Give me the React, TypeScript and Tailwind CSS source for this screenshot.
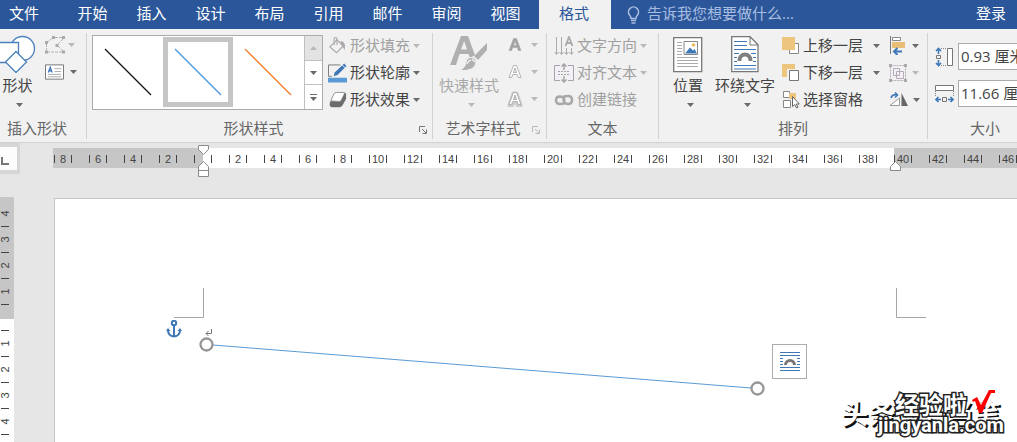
import React from 'react'

const tabs = ['开始', '插入', '设计', '布局', '引用', '邮件', '审阅', '视图']
const rulerMarks = ['8', '6', '4', '2', '', '2', '4', '6', '8', '10', '12', '14', '16', '18', '20', '22', '24', '26', '28', '30', '32', '34', '36', '38', '40', '42', '44', '46']
const sideMarks = ['4', '3', '2', '1', '', '1', '2', '3', '4', '5']

function Caret({ off }: { off?: boolean }) {
  return (
    <svg viewBox="0 0 7 4" className={off ? 'w-[7px] h-1 shrink-0 text-[#b9b9b9]' : 'w-[7px] h-1 shrink-0 text-[#6a6a6a]'} fill="currentColor">
      <path d="M0 0h7L3.5 4z" />
    </svg>
  )
}

function Launcher({ off }: { off?: boolean }) {
  return (
    <button aria-label="更多选项" className={off ? 'pt-1 text-[#b9b9b9]' : 'pt-1 text-[#777]'}>
      <svg viewBox="0 0 8 8" className="w-2 h-2" fill="none" stroke="currentColor">
        <path d="M.5 6V.5H6M3 3l4 4M7.500 3.500v4h-4" />
      </svg>
    </button>
  )
}

function Group({ label, className, launcher, children }: { label: string; className: string; launcher?: React.ReactNode; children: React.ReactNode }) {
  return (
    <section className={'shrink-0 flex flex-col border-r border-[#d2d2d2] ' + className}>
      <div className="h-[84px] flex">{children}</div>
      <div className="h-[22px] flex items-center text-[#666]">
        <h2 className={'flex-1 text-center whitespace-nowrap ' + (launcher ? '-ml-1' : '')}>{label}</h2>
        {launcher}
      </div>
    </section>
  )
}

function RowButton({ icon, text, off, caret = true, wide }: { icon: React.ReactNode; text: string; off?: boolean; caret?: boolean; wide?: boolean }) {
  return (
    <button className={'h-[27px] flex items-center whitespace-nowrap ' + (off ? 'text-[#a0a0a0]' : 'text-[#444]')}>
      {icon}
      <span className="pl-[3px] pb-[2px]">{text}</span>
      {caret && <span className={wide ? 'pl-[10px]' : 'pl-[3px]'}><Caret off={off} /></span>}
    </button>
  )
}

function BigButton({ icon, text, off, className }: { icon: React.ReactNode; text: string; off?: boolean; className: string }) {
  return (
    <button className={'h-[76px] flex flex-col items-center whitespace-nowrap ' + (off ? 'text-[#a8a8a8] ' : 'text-[#444] ') + className}>
      <span className="h-10 flex items-end">{icon}</span>
      <span className="h-6 leading-6">{text}</span>
      <span className="pt-[6px] pl-1"><Caret off={off} /></span>
    </button>
  )
}

function ShapesIcon() {
  return (
    <svg viewBox="0 0 36 38" className="w-9 h-[38px]" fill="#fff" stroke="#4a80bd" strokeWidth="1.3">
      <circle cx="22.500" cy="13.500" r="12" />
      <path d="M-2 7.500h20.500v20H-2z" />
      <path d="M16 16.500L26.500 27 16 37.500 5.500 27z" />
    </svg>
  )
}

function EditPointsIcon() {
  return (
    <svg viewBox="0 0 20 18" className="w-5 h-[18px]" fill="none" stroke="#b4b4b4">
      <path d="M1.500 7L7 2.500M10 1.500h7M18 3l-5 5M13 10l5 5M17 16H3M1.500 8v6" strokeDasharray="3 1" />
      <path d="M7 0h3v3H7zM17 0h3v3h-3zM0 5h3v3H0zM10.500 8h3v3h-3zM0 14.500h3v3H0zM17 14.500h3v3h-3z" fill="#aaa" stroke="none" />
    </svg>
  )
}

function TextBoxIcon() {
  return (
    <svg viewBox="0 0 20 16" className="w-[19px] h-4" fill="none">
      <path d="M.5.500h19v15H.5z" fill="#fff" stroke="#737373" />
      <path d="M10 4.500h7M10 7.500h7M3 10.500h14M3 13h14" stroke="#aaa" />
      <path d="M3.500 8.500L5.500 3l2 5.500M4.200 6.800h2.600" stroke="#3a72b5" strokeWidth="1.300" />
    </svg>
  )
}

function FillIcon() {
  return (
    <svg viewBox="0 0 20 20" className="w-[19px] h-5" fill="none" stroke="#aaa" strokeWidth="1.200">
      <path d="M2 11l7.500-7.500L16 10l-7 7z" fill="#f4f0f4" />
      <path d="M6.500 9V3q0-2 1.500-2t1.500 2v6" />
      <path d="M13 5q4-.5 5 4.500l-.5 5q-2-4-3-4.500z" fill="#aaa" stroke="none" />
    </svg>
  )
}

function OutlineIcon() {
  return (
    <svg viewBox="0 0 20 20" className="w-[19px] h-5" fill="none">
      <path d="M13 1.500H.5v12H4" stroke="#777" />
      <path d="M0 15h20v5H0z" fill="#5b9bd5" />
      <path d="M6 13.500l1-4L17 0l2.500 2.500L10 12z" fill="#3f78b6" />
      <path d="M15 1.500L18 4.500" stroke="#f1f1f1" />
    </svg>
  )
}

function EffectIcon() {
  return (
    <svg viewBox="0 0 20 20" className="w-[19px] h-5">
      <path d="M2 13L6 4q1-2 3-2h8q2 0 2 2v5l-4 7q-1 1.500-3 1.500H4q-3 0-2-4.500z" fill="#6d6d6d" />
      <path d="M3 11l3-7q1-2 2.500-2H16q2 0 1 2l-3 6q-.5 1.500-2 1.500z" fill="#fff" stroke="#888" strokeWidth=".8" />
    </svg>
  )
}

function QuickStyleIcon() {
  return (
    <svg viewBox="0 0 38 38" className="w-[38px] h-[38px]" fill="#b0b0b0">
      <path d="M0 30L11 1h7l7 19-5 3-1.500-4H9.500l-3.500 11zM11 14.500h6L14.200 6z" fillRule="evenodd" />
      <path d="M37 8v7L28 25l-4-4z" />
      <path d="M21 22.500q5 0 5 5-1 9-17 8 6-2 7-8 1-5 5-5z" stroke="#f1f1f1" />
      <path d="M17 29q1-3 4-4M22 24l3 3" fill="none" stroke="#f1f1f1" strokeWidth="1.400" />
    </svg>
  )
}

function LetterIcon({ kind }: { kind: 'solid' | 'outline' | 'glow' }) {
  return (
    <svg viewBox="0 0 16 16" className="w-4 h-4" strokeLinejoin="round">
      {kind === 'glow' && <path d="M2.500 14.500L6.500 2.500h3l4 12h-2.500l-1-3h-4l-1 3zM6.500 9h3L8 4.500z" stroke="#ccc" strokeWidth="4" fill="#bbb" fillRule="evenodd" />}
      <path
        d="M2 13.500L6.500 1.500h3l4.500 12h-2.700l-1-3H5.700l-1 3zM6.500 8.500h3L8 4z"
        fillRule="evenodd"
        fill={kind === 'solid' ? '#a2a2a2' : '#fff'}
        stroke={kind === 'solid' ? '#a2a2a2' : '#aaa'}
        strokeWidth={kind === 'solid' ? '.5' : '.9'}
      />
    </svg>
  )
}

function DirectionIcon() {
  return (
    <svg viewBox="0 0 20 20" className="w-5 h-5" fill="none" stroke="#aaa">
      <path d="M2.500 1v17M7.500 1v17M12.500 12v6M17.500 12v6" />
      <path d="M.5 16l2 2.500 2-2.500M5.500 16l2 2.500 2-2.500M10.500 16l2 2.500 2-2.500M15.500 16l2 2.500 2-2.500" />
      <path d="M11.500 10L15 1l3.500 9M12.500 7h5" strokeWidth="1.800" />
    </svg>
  )
}

function AlignTextIcon() {
  return (
    <svg viewBox="0 0 20 20" className="w-5 h-5" fill="none" stroke="#a9a2ab">
      <path d="M6 2.500H.5v15H6M14 2.500h5.500v15H14" fill="#f5eff7" />
      <path d="M4 8.500h12M4 11.500h12" strokeDasharray="2 1" />
      <path d="M10 1v6M7.500 3.500L10 1l2.500 2.500M10 13v6M7.500 16.500L10 19l2.500-2.500" strokeWidth="1.500" />
    </svg>
  )
}

function LinkIcon() {
  return (
    <svg viewBox="0 0 20 20" className="w-5 h-5" fill="none" stroke="#a8a8a8" strokeWidth="2.600">
      <path d="M11 13Q8.500 14 6 14q-4 0-4-3.700T6 6.500q3 0 4 2.500t-1 2.500M9 7Q11.500 6 14 6q4 0 4 4t-4 4q-3 0-4-2.500t1-2.500" />
    </svg>
  )
}

function PositionIcon() {
  return (
    <svg viewBox="0 0 30 36" className="w-[30px] h-9" fill="none">
      <path d="M.7.700h28v34H.7z" fill="#fff" stroke="#777" strokeWidth="1.300" />
      <path d="M4 5.500h5M4 8.500h5M4 11.500h5M4 14.500h5M4 17.500h5M4 20.500h21M4 23.500h21M4 26.500h21M4 29.500h21" stroke="#aaa" />
      <path d="M11 4.500h13.500v13H11z" stroke="#888" />
      <path d="M12 16.500l5-6 3 3 1.500-1.500 2.500 4.500z" fill="#3f78b6" />
      <circle cx="20.500" cy="8" r="1.800" fill="#f0b45c" />
    </svg>
  )
}

function WrapIcon() {
  return (
    <svg viewBox="0 0 28 37" className="w-7 h-[37px]" fill="none">
      <path d="M.7.700H19l8 8v27H.7z" fill="#fff" stroke="#777" strokeWidth="1.300" />
      <path d="M19 1v8h8" stroke="#777" />
      <path d="M3 5.500h13M3 9.500h13M3 13.500h22M3 17.500h5M3 21.500h3M3 25.500h3M20 17.500h5M22 21.500h3M22 25.500h3M3 29.500h22M3 33h22" stroke="#3f78b6" strokeWidth="1.200" />
      <path d="M8.500 25v-1a5.500 5.500 0 0 1 11 0v1" stroke="#808080" strokeWidth="4" />
    </svg>
  )
}

function ForwardIcon() {
  return (
    <svg viewBox="0 0 18 18" className="w-[18px] h-[18px]">
      <path d="M7.500 6.500h9v10h-9z" fill="#fff" stroke="#888" />
      <path d="M0 0h13v13H0z" fill="#edc57c" />
    </svg>
  )
}

function BackwardIcon() {
  return (
    <svg viewBox="0 0 18 18" className="w-[18px] h-[18px]">
      <path d="M0 0h13v13H0z" fill="#edc57c" />
      <path d="M5 5h12v12H5z" fill="#f1f1f1" />
      <path d="M7.500 6.500h9v10h-9z" fill="#fff" stroke="#777" />
    </svg>
  )
}

function SelectPaneIcon() {
  return (
    <svg viewBox="0 0 18 18" className="w-[18px] h-[18px]" fill="#fff" stroke="#888">
      <path d="M1.500.500h6v6h-6zM1.500 9.500h7v7h-7z" />
      <path d="M7 2h7v6H7z" fill="#edc57c" stroke="none" />
      <path d="M10.500 5.500v10l2.300-2 1.700 3.500 1.500-.8-1.700-3.200h3z" stroke="#666" />
    </svg>
  )
}

function AlignIcon() {
  return (
    <svg viewBox="0 0 18 19" className="w-[18px] h-[19px]" fill="none">
      <path d="M1.500 0v18" stroke="#777" />
      <path d="M3.500 1.500h8v3h-8z" fill="#fff" stroke="#888" />
      <path d="M3 6h13v6H3z" fill="#e9bf78" />
      <path d="M13 15.500H5M8.500 12L5 15.500 8.500 19" stroke="#3f78b6" strokeWidth="2" />
    </svg>
  )
}

function GroupIcon() {
  return (
    <svg viewBox="0 0 18 18" className="w-[18px] h-[18px]" fill="none" stroke="#b5adb7">
      <path d="M1.500 1.500h15v15h-15z" strokeDasharray="2 1" />
      <path d="M4.500 4.500h6v7h-6zM7.500 7.500h7v7h-7z" fill="#f5eff7" />
      <path d="M0 0h3v3H0zM15 0h3v3h-3zM0 15h3v3H0zM15 15h3v3h-3z" fill="#aaa" stroke="none" />
    </svg>
  )
}

function RotateIcon() {
  return (
    <svg viewBox="0 0 19 15" className="w-[19px] h-[15px]" fill="none">
      <path d="M1 13.500L10.500 6v7.500z" fill="#fff" stroke="#999" />
      <path d="M12.500 1v13H19z" fill="#666" />
      <path d="M2 6q1-4 6-3M6 .5L8.500 3 6 5.500" stroke="#3f78b6" strokeWidth="1.500" />
    </svg>
  )
}

function HeightIcon() {
  return (
    <svg viewBox="0 0 19 20" className="w-[19px] h-5" fill="none">
      <path d="M12.500 1.500h5v17h-5z" fill="#fff" stroke="#777" />
      <path d="M6 1.500h6M6 18.500h6" stroke="#888" strokeDasharray="1 1" />
      <path d="M1.500 8.500h4v3h-4z" stroke="#777" />
      <path d="M3.500 7V1.500M1 4l2.500-2.500L6 4M3.500 13v5.500M1 16l2.500 2.500L6 16" stroke="#3f78b6" strokeWidth="1.600" />
    </svg>
  )
}

function WidthIcon() {
  return (
    <svg viewBox="0 0 19 20" className="w-[19px] h-5" fill="none">
      <path d="M.5 1.500h18v5H.5z" fill="#fff" stroke="#777" />
      <path d="M.5 7v6M18.500 7v6" stroke="#888" strokeDasharray="1 1" />
      <path d="M7.500 13.500h4v4h-4z" stroke="#777" />
      <path d="M6 15.500H1M3.500 13L1 15.500 3.500 18M13 15.500h5M15.500 13l2.500 2.500-2.500 2.500" stroke="#3f78b6" strokeWidth="1.600" />
    </svg>
  )
}

function StyleSwatch({ color, name, selected }: { color: string; name: string; selected?: boolean }) {
  return (
    <button aria-label={name} className={'w-[70px] h-[70px] border-[5px] ' + (selected ? 'border-[#c5c5c5]' : 'border-white')}>
      <svg viewBox="0 0 60 60" className="w-[60px] h-[60px]">
        <path d="M7 7l46 46" stroke={color} strokeWidth="1.300" />
      </svg>
    </button>
  )
}

function TabBar() {
  return (
    <nav className="h-[29px] shrink-0 flex items-center bg-[#2b579a] text-white whitespace-nowrap overflow-hidden">
      <button className="w-[63px] h-full shrink-0 pl-[9px] pb-1 text-left">文件</button>
      {tabs.map((tab) => (
        <button key={tab} className="w-[59px] h-full shrink-0 pb-1">{tab}</button>
      ))}
      <button className="w-[72px] h-full ml-1 pr-[2px] pb-1 shrink-0 bg-[#f1f1f1] text-[#2b579a]">格式</button>
      <label className="flex-1 h-full flex items-center gap-[7px] pl-4 pb-1 text-[#a9bde0]">
        <svg viewBox="0 0 13 18" className="w-[13px] h-[18px] shrink-0 mt-1" fill="none" stroke="currentColor" strokeWidth="1.600">
          <path d="M4 12.500Q4 10.500 2.500 9a5 5 0 1 1 8 0Q9 10.500 9 12.500zM4 14.500h5M4.500 17h4" />
        </svg>
        <input className="w-full placeholder:text-[#a9bde0] placeholder:opacity-100 outline-none" aria-label="告诉我" placeholder="告诉我您想要做什么..." />
      </label>
      <button className="shrink-0 pr-[11px] pb-1">登录</button>
    </nav>
  )
}

function Ribbon() {
  return (
    <div className="shrink-0 flex pt-1 pb-[3px] bg-[#f1f1f1] border-b border-[#d2d2d2] overflow-hidden">
      <Group label="插入形状" className="w-[87px] pr-3">
        <BigButton icon={<ShapesIcon />} text="形状" className="w-[35px] shrink-0" />
        <div className="flex flex-col gap-1 pl-[10px]">
          <button aria-label="编辑形状" className="h-[23px] flex items-center gap-[3px]"><EditPointsIcon /><Caret off /></button>
          <button aria-label="文本框" className="h-[23px] flex items-center gap-[6px]"><TextBoxIcon /><Caret /></button>
        </div>
      </Group>

      {/* shape styles gallery */}
      <Group label="形状样式" className="w-[346px] pl-[5px] pr-[5px]" launcher={<Launcher />}>
        <div className="h-[75px] mt-[2px] flex border border-[#ababab] bg-white">
          <div className="flex pt-[1px]">
            <StyleSwatch color="#111" name="黑色细线" />
            <StyleSwatch color="#4a94d8" name="蓝色细线" selected />
            <StyleSwatch color="#ed7d31" name="橙色细线" />
          </div>
          <div className="w-[18px] ml-px flex flex-col border-l border-[#c0c0c0]">
            <button aria-label="上一行" className="flex-1 flex items-center justify-center bg-[#e3e3e3] border-b border-[#c0c0c0]"><span className="rotate-180 flex"><Caret off /></span></button>
            <button aria-label="下一行" className="flex-1 flex items-center justify-center border-b border-[#c0c0c0]"><Caret /></button>
            <button aria-label="其他" className="flex-1 flex flex-col items-center justify-center gap-[2px]"><span className="w-[7px] h-px bg-[#6a6a6a]" /><Caret /></button>
          </div>
        </div>
        <div className="pl-[5px] -mt-px">
          <RowButton icon={<FillIcon />} text="形状填充" off />
          <RowButton icon={<OutlineIcon />} text="形状轮廓" />
          <RowButton icon={<EffectIcon />} text="形状效果" />
        </div>
      </Group>

      <Group label="艺术字样式" className="w-[114px] pl-[5px] pr-[6px]" launcher={<Launcher off />}>
        <BigButton icon={<QuickStyleIcon />} text="快速样式" off className="w-[62px]" />
        <div className="pl-[7px] -mt-[2px]">
          <button aria-label="文本填充" className="h-[27px] flex items-center gap-2"><LetterIcon kind="solid" /><Caret off /></button>
          <button aria-label="文本轮廓" className="h-[27px] flex items-center gap-2"><LetterIcon kind="outline" /><Caret off /></button>
          <button aria-label="文本效果" className="h-[27px] flex items-center gap-2"><LetterIcon kind="glow" /><Caret off /></button>
        </div>
      </Group>

      <Group label="文本" className="w-[112px] pl-[7px] pr-[7px]">
        <div className="-mt-px">
          <RowButton icon={<DirectionIcon />} text="文字方向" off />
          <RowButton icon={<AlignTextIcon />} text="对齐文本" off />
          <RowButton icon={<LinkIcon />} text="创建链接" off caret={false} />
        </div>
      </Group>

      <Group label="排列" className="w-[269px] pl-[6px] pr-[6px]">
        <BigButton icon={<PositionIcon />} text="位置" className="w-[46px]" />
        <BigButton icon={<WrapIcon />} text="环绕文字" className="w-[68px]" />
        <div className="w-[102px] pl-[3px] -mt-px">
          <RowButton icon={<ForwardIcon />} text="上移一层" wide />
          <RowButton icon={<BackwardIcon />} text="下移一层" wide />
          <RowButton icon={<SelectPaneIcon />} text="选择窗格" caret={false} />
        </div>
        <div className="pl-2 -mt-px">
          <button aria-label="对齐" className="h-[27px] flex items-center gap-[5px]"><AlignIcon /><Caret /></button>
          <button aria-label="组合" className="h-[27px] flex items-center gap-[5px]"><GroupIcon /><Caret off /></button>
          <button aria-label="旋转" className="h-[27px] flex items-center gap-[5px]"><RotateIcon /><Caret /></button>
        </div>
      </Group>

      <Group label="大小" className="w-[115px] pl-[7px] pr-[7px]">
        <div className="pt-[10px] flex flex-col gap-[10px] text-[#444]">
          <label className="flex items-center gap-1">
            <HeightIcon />
            <input aria-label="高度" defaultValue="0.93 厘米" className="w-20 h-[27px] pl-[2px] pb-[2px] bg-white border border-[#ababab] outline-none" />
          </label>
          <label className="flex items-center gap-1">
            <WidthIcon />
            <input aria-label="宽度" defaultValue="11.66 厘米" className="w-20 h-[27px] pl-[2px] pb-[2px] bg-white border border-[#ababab] outline-none" />
          </label>
        </div>
      </Group>
    </div>
  )
}

function Ruler() {
  return (
    <div className="h-[54px] shrink-0 flex items-start">
      <div className="w-5 h-[31px] shrink-0 pt-1 pr-[3px] pb-1 bg-[#d6d6d6]">
        <button aria-label="制表符" className="w-full h-full flex items-center bg-[#fcfcfc]">
          <svg viewBox="0 0 9 8" className="w-[9px] h-2 mt-1" fill="none" stroke="#777" strokeWidth="2">
            <path d="M2 0v7h7" />
          </svg>
        </button>
      </div>
      <div className="relative flex-1 min-w-0 ml-[33px] mt-[5px]">
        <div className="h-5 pl-px flex overflow-hidden bg-[linear-gradient(to_right,#c6c6c6_150px,#fff_150px,#fff_841px,#c6c6c6_841px)] font-['Liberation_Sans',sans-serif] text-[11px] text-[#444]">
          {rulerMarks.map((mark, i) => (
            <div key={i} className="w-[35px] h-full shrink-0 flex items-center pt-[2px]">
              <span className="w-px h-2 bg-[#444]" />
              <span className="w-4 text-center">{mark}</span>
              <span className="w-px h-2 bg-[#444]" />
            </div>
          ))}
        </div>
        {/* indent handles */}
        <svg viewBox="0 0 12 32" className="absolute left-[145px] -top-[3px] w-3 h-8" fill="#fff" stroke="#8a8a8a">
          <path d="M.5.500h10v4l-5 5-5-5zM.5 31.500v-10l5-5 5 5v10zM.5 25.500h10" />
        </svg>
        <svg viewBox="0 0 12 10" className="absolute left-[837px] top-[13px] w-3 h-[10px]" fill="#fff" stroke="#8a8a8a">
          <path d="M.5 9.500v-4l5-5 5 5v4z" />
        </svg>
      </div>
    </div>
  )
}

function SideRuler() {
  return (
    <div className="w-[14px] shrink-0 pt-1 overflow-hidden bg-[linear-gradient(to_bottom,#c6c6c6_122px,#fff_122px)] font-['Liberation_Sans',sans-serif] text-[11px] leading-none text-[#444]">
      {sideMarks.map((mark, i) => (
        <div key={i} className="h-[26px] pl-px flex flex-col">
          <span className="flex-1 w-2 flex items-center justify-center -rotate-90">{mark}</span>
          <span className="w-2 h-px bg-[#444]" />
        </div>
      ))}
    </div>
  )
}

function Watermark() {
  return (
    <div className="absolute left-[786px] top-[190px] w-[166px] h-[50px] whitespace-nowrap font-bold text-white select-none">
      <span className="absolute left-0 top-[10px] text-[27px] leading-[30px] [text-shadow:2px_2px_0_#111]">头条@巧当笔</span>
      <span className="absolute left-[54px] top-[2px] text-2xl leading-7 [-webkit-text-stroke:3px_#222] [paint-order:stroke_fill]">经验啦</span>
      <span className="absolute left-[37px] top-[24px] font-['Roboto',sans-serif] text-[20px] leading-6 [-webkit-text-stroke:3px_#222] [paint-order:stroke_fill]">jingyanla.com</span>
      <svg viewBox="0 0 24 24" className="absolute left-[131px] top-px w-6 h-6" fill="#f00">
        <path d="M0 10l5-3 4 8L17 0h6v3h-4L10 23H7L3 11l-2 1z" />
      </svg>
    </div>
  )
}

function Page() {
  return (
    <main className="relative flex-1 min-w-0 ml-10 mt-px bg-white border-l border-t border-[#c6c6c6] overflow-hidden">
      {/* margin corners and the connector line */}
      <svg className="absolute left-0 top-0 w-[900px] h-60" viewBox="0 0 900 240" fill="none">
        <path d="M148.500 89v29.500H119M841.500 89v29.500H871" stroke="#a6a6a6" />
        <path d="M158 146l538 43" stroke="#5b9bd5" />
        <circle cx="151.500" cy="145.500" r="6" fill="#fff" stroke="#969696" strokeWidth="2.300" />
        <circle cx="702.500" cy="189.500" r="6" fill="#fff" stroke="#969696" strokeWidth="2.300" />
        <path d="M156.500 130v4.500H151M153.500 132l-2.500 2.500 2.500 2.500" stroke="#777" />
      </svg>
      <svg viewBox="0 0 16 18" className="absolute left-[111px] top-[121px] w-4 h-[18px]" fill="none" stroke="#3f78b6" strokeWidth="2">
        <circle cx="8" cy="3" r="2.200" />
        <path d="M8 5v12M2 10q0 6 6 6.500 6-.5 6-6.500" />
        <path d="M0 11l2-3 2.500 3zM11.500 11L14 8l2 3z" fill="#3f78b6" stroke="none" />
      </svg>
      <button aria-label="布局选项" className="absolute left-[717px] top-[145px] w-[35px] h-[35px] flex items-center justify-center bg-white border border-[#ababab]">
        <svg viewBox="0 0 20 20" className="w-5 h-5" fill="none">
          <path d="M0 .5h20M0 3.500h20M0 6.500h3M0 9.500h3M0 12.500h3M17 6.500h3M17 9.500h3M17 12.500h3M0 15.500h20M0 18.500h20" stroke="#3f78b6" />
          <path d="M5.500 13a4.500 4.500 0 0 1 9 0" stroke="#777" strokeWidth="3" />
        </svg>
      </button>
      <Watermark />
    </main>
  )
}

export default function App() {
  return (
    <div className="min-h-screen flex flex-col overflow-hidden bg-[#e6e6e6] font-['Open_Sans','Noto_Sans_CJK_SC',sans-serif] text-[15px] leading-5">
      <TabBar />
      <Ribbon />
      <Ruler />
      <div className="flex-1 min-h-60 flex">
        <SideRuler />
        <Page />
      </div>
    </div>
  )
}
